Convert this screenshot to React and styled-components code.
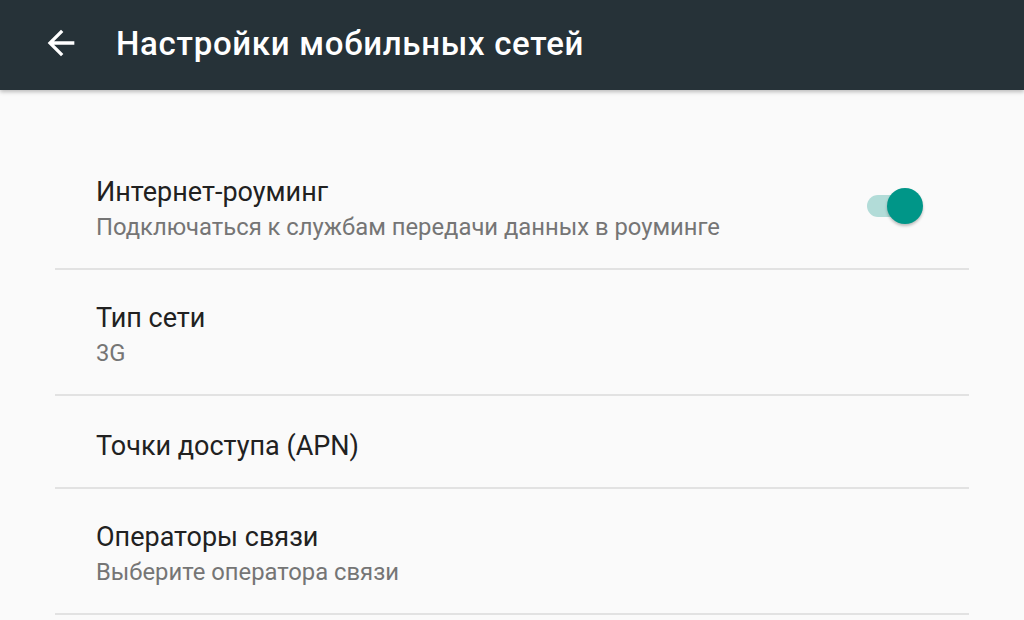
import React from "react";
import styled, { createGlobalStyle } from "styled-components";

const Global = createGlobalStyle`
  html, body { margin: 0; padding: 0; background: #fafafa; }
  body { font-family: Roboto, "Noto Sans", sans-serif; }
  * { box-sizing: border-box; }
`;

const Page = styled.div`
  width: 1024px;
  height: 620px;
  overflow: hidden;
  background: #fafafa;
  display: flex;
  flex-direction: column;
`;

const AppBar = styled.header`
  height: 90px;
  flex: none;
  background: #263238;
  display: flex;
  align-items: center;
  padding-left: 41px;
  box-shadow: 0 2px 4px rgba(0, 0, 0, 0.25);
  position: relative;
  z-index: 1;
`;

const BackIcon = styled.svg`
  width: 40px;
  height: 40px;
  fill: #ffffff;
  flex: none;
  margin-top: -4px;
`;

const Title = styled.h1`
  margin: -4px 0 0 35px;
  color: #ffffff;
  font-family: Roboto, sans-serif;
  font-weight: 500;
  font-size: 33px;
  letter-spacing: 0.7px;
  white-space: nowrap;
`;

const List = styled.div`
  margin: 54px 55px 0;
  display: flex;
  flex-direction: column;
`;

const Row = styled.div`
  height: ${(p) => (p.$single ? "93px" : "126px")};
  flex: none;
  border-bottom: 2px solid #e2e2e2;
  display: flex;
  align-items: center;
  padding: 0 46px 0 41px;
`;

const Texts = styled.div`
  flex: 1;
  display: flex;
  flex-direction: column;
  gap: 5px;
  margin-top: ${(p) => (p.$single ? "8px" : "5px")};
`;

const PrimaryText = styled.div`
  font-size: 27px;
  line-height: 32px;
  color: #212121;
  white-space: nowrap;
`;

const SecondaryText = styled.div`
  font-size: 23.8px;
  line-height: 28px;
  color: #757575;
  white-space: nowrap;
`;

const Switch = styled.div`
  position: relative;
  width: 56px;
  height: 36px;
  flex: none;
`;

const Track = styled.div`
  position: absolute;
  left: 0;
  top: 7px;
  width: 48px;
  height: 22px;
  border-radius: 11px;
  background: #b2dcd8;
`;

const Thumb = styled.div`
  position: absolute;
  right: 0;
  top: 0;
  width: 36px;
  height: 36px;
  border-radius: 50%;
  background: #009688;
  box-shadow: 0 2px 3px rgba(0, 0, 0, 0.25);
`;

const items = [
  { title: "Интернет-роуминг", sub: "Подключаться к службам передачи данных в роуминге", toggle: true },
  { title: "Тип сети", sub: "3G" },
  { title: "Точки доступа (APN)" },
  { title: "Операторы связи", sub: "Выберите оператора связи" },
];

export default function App() {
  return (
    <Page>
      <Global />
      <AppBar>
        <BackIcon viewBox="0 0 24 24">
          <path d="M20 11H7.83l5.59-5.59L12 4l-8 8 8 8 1.41-1.41L7.83 13H20v-2z" />
        </BackIcon>
        <Title>Настройки мобильных сетей</Title>
      </AppBar>
      <List>
        {items.map((it) => (
          <Row key={it.title} $single={!it.sub}>
            <Texts $single={!it.sub}>
              <PrimaryText>{it.title}</PrimaryText>
              {it.sub && <SecondaryText>{it.sub}</SecondaryText>}
            </Texts>
            {it.toggle && (
              <Switch>
                <Track />
                <Thumb />
              </Switch>
            )}
          </Row>
        ))}
      </List>
    </Page>
  );
}
